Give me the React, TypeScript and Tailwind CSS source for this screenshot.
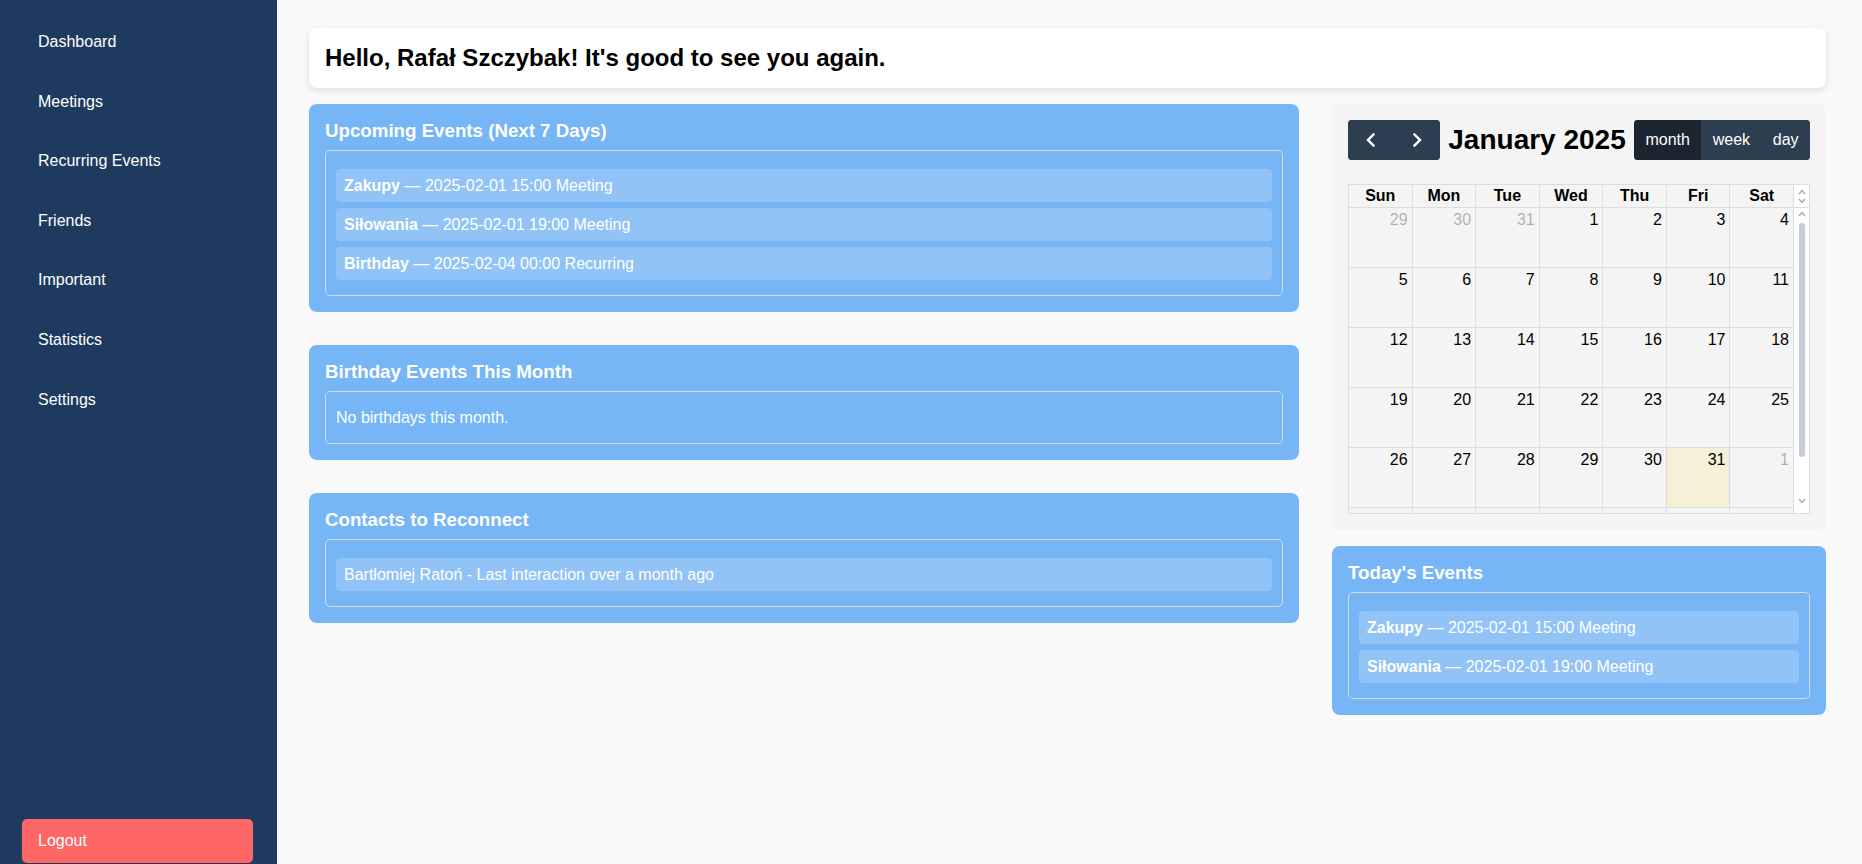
import React from "react";

type Ev = { name: string; rest: string };

const upcoming: Ev[] = [
  { name: "Zakupy", rest: " — 2025-02-01 15:00 Meeting" },
  { name: "Siłowania", rest: " — 2025-02-01 19:00 Meeting" },
  { name: "Birthday", rest: " — 2025-02-04 00:00 Recurring" },
];

const today: Ev[] = [
  { name: "Zakupy", rest: " — 2025-02-01 15:00 Meeting" },
  { name: "Siłowania", rest: " — 2025-02-01 19:00 Meeting" },
];

const navItems = [
  "Dashboard",
  "Meetings",
  "Recurring Events",
  "Friends",
  "Important",
  "Statistics",
  "Settings",
];

function Card({ title, children }: { title: string; children: React.ReactNode }) {
  return (
    <section className="rounded-[8px] bg-[#76b5f6] p-4 text-white">
      <h3 className="mb-[8.5px] text-[18.72px] font-bold leading-[21.5px]">{title}</h3>
      {children}
    </section>
  );
}

function EventList({ items }: { items: Ev[] }) {
  return (
    <div className="rounded-[5px] border border-[#d6dde5] px-[10px] pb-[9px] pt-[18px]">
      {items.map((e, i) => (
        <div
          key={i}
          className="mb-[6px] rounded-[4px] bg-white/20 px-2 py-[7px] text-[16px] leading-[19px]"
        >
          {e.name ? <strong className="font-bold">{e.name}</strong> : null}
          {e.rest}
        </div>
      ))}
    </div>
  );
}

function ChevronUp() {
  return (
    <svg width="8" height="6" viewBox="0 0 8 6" className="block">
      <polyline points="1,5 4,1.5 7,5" fill="none" stroke="#a8a8a8" strokeWidth="1.3" />
    </svg>
  );
}
function ChevronDown() {
  return (
    <svg width="8" height="6" viewBox="0 0 8 6" className="block">
      <polyline points="1,1 4,4.5 7,1" fill="none" stroke="#a8a8a8" strokeWidth="1.3" />
    </svg>
  );
}

function NavChevron({ dir }: { dir: "left" | "right" }) {
  return (
    <svg width="16" height="16" viewBox="0 0 16 16" className="block">
      <polyline
        points={dir === "left" ? "10.5,2.5 5,8 10.5,13.5" : "5.5,2.5 11,8 5.5,13.5"}
        fill="none"
        stroke="white"
        strokeWidth="2.4"
        strokeLinecap="square"
      />
    </svg>
  );
}

type Day = { n: number | null; other?: boolean; today?: boolean };

const weeks: Day[][] = [
  [{ n: 29, other: true }, { n: 30, other: true }, { n: 31, other: true }, { n: 1 }, { n: 2 }, { n: 3 }, { n: 4 }],
  [{ n: 5 }, { n: 6 }, { n: 7 }, { n: 8 }, { n: 9 }, { n: 10 }, { n: 11 }],
  [{ n: 12 }, { n: 13 }, { n: 14 }, { n: 15 }, { n: 16 }, { n: 17 }, { n: 18 }],
  [{ n: 19 }, { n: 20 }, { n: 21 }, { n: 22 }, { n: 23 }, { n: 24 }, { n: 25 }],
  [{ n: 26 }, { n: 27 }, { n: 28 }, { n: 29 }, { n: 30 }, { n: 31, today: true }, { n: 1, other: true }],
  [{ n: null }, { n: null }, { n: null }, { n: null }, { n: null }, { n: null }, { n: null }],
];

const dayNames = ["Sun", "Mon", "Tue", "Wed", "Thu", "Fri", "Sat"];

function Calendar() {
  return (
    <div className="rounded-[8px] bg-[#f4f4f4] p-4">
      <div className="flex h-[40px] items-center justify-between">
        <div className="flex h-[40px] overflow-hidden rounded-[4px] bg-[#2c3e50]">
          <button className="flex w-[46px] items-center justify-center border border-[#2c3e50]">
            <NavChevron dir="left" />
          </button>
          <button className="flex w-[46px] items-center justify-center border border-[#2c3e50]">
            <NavChevron dir="right" />
          </button>
        </div>
        <h2 className="text-[28px] font-bold leading-[32px] text-black">January 2025</h2>
        <div className="flex h-[40px] overflow-hidden rounded-[4px] text-[16px] text-white">
          <button className="border border-[#1a252f] bg-[#1a252f] px-[10.4px]">month</button>
          <button className="border border-[#2c3e50] bg-[#2c3e50] px-[10.4px]">week</button>
          <button className="border border-[#2c3e50] bg-[#2c3e50] px-[10.4px]">day</button>
        </div>
      </div>

      <div className="mt-[24px] flex flex-col border border-[#dddddd]">
        <div className="flex border-b border-[#dddddd]">
          <div className="grid flex-1 grid-cols-7">
            {dayNames.map((d) => (
              <div
                key={d}
                className="border-r border-[#dddddd] py-[2px] text-center text-[16px] font-bold leading-[18px] text-black"
              >
                {d}
              </div>
            ))}
          </div>
          <div className="flex w-[15px] flex-col items-center justify-center gap-[3px] bg-white">
            <ChevronUp />
            <ChevronDown />
          </div>
        </div>
        <div className="flex h-[305px] overflow-hidden">
          <div className="flex-1">
            {weeks.map((w, wi) => (
              <div key={wi} className="grid h-[60px] grid-cols-7 border-b border-[#dddddd]">
                {w.map((d, di) => (
                  <div
                    key={di}
                    className={
                      "border-r border-[#dddddd] px-[4px] pt-[3px] text-right text-[16px] leading-[18px] " +
                      (d.today ? "bg-[#f6f0d6] " : "") +
                      (d.other ? "text-black/30" : "text-black")
                    }
                  >
                    {d.n}
                  </div>
                ))}
              </div>
            ))}
          </div>
          <div className="flex w-[15px] flex-col items-center bg-white pt-[3px]">
            <ChevronUp />
            <div className="mt-[6px] h-[234px] w-[6px] rounded-full bg-[#c5ced8]" />
            <div className="mt-[41px]">
              <ChevronDown />
            </div>
          </div>
        </div>
      </div>
    </div>
  );
}

export default function App() {
  return (
    <div className="flex min-h-screen bg-[#f9f9f9] font-['Liberation_Sans',Arial,sans-serif]">
      <aside className="flex h-screen w-[277px] shrink-0 flex-col bg-[#1f3a5f]">
        <nav className="flex flex-col pt-[12px]">
          {navItems.map((n) => (
            <a key={n} className="block py-5 pl-[38px] text-[16px] leading-[19.6px] text-white">
              {n}
            </a>
          ))}
        </nav>
        <div className="mt-auto px-[22px] pb-[1px]">
          <button className="h-[44px] w-[231px] rounded-[5px] bg-[#ff6666] pl-4 text-left text-[16px] text-white">
            Logout
          </button>
        </div>
      </aside>

      <main className="flex-1 pl-[32px] pr-[36px] pt-[28px]">
        <div className="rounded-[8px] bg-white px-4 py-4 shadow-[0_2px_6px_rgba(0,0,0,0.12)]">
          <h2 className="text-[24px] font-bold leading-[28px] text-black">
            Hello, Rafał Szczybak! It's good to see you again.
          </h2>
        </div>

        <div className="mt-4 grid grid-cols-[990px_494px] items-start gap-x-[33px]">
          <div className="flex flex-col gap-[33px]">
            <Card title="Upcoming Events (Next 7 Days)">
              <EventList items={upcoming} />
            </Card>
            <Card title="Birthday Events This Month">
              <div className="rounded-[5px] border border-[#d6dde5] px-[10px] pb-[16px] pt-[17px] text-[16px] leading-[18px]">
                No birthdays this month.
              </div>
            </Card>
            <Card title="Contacts to Reconnect">
              <EventList items={[{ name: "", rest: "Bartłomiej Ratoń - Last interaction over a month ago" }]} />
            </Card>
          </div>

          <div className="flex flex-col gap-4">
            <Calendar />
            <Card title="Today's Events">
              <EventList items={today} />
            </Card>
          </div>
        </div>
      </main>
    </div>
  );
}
